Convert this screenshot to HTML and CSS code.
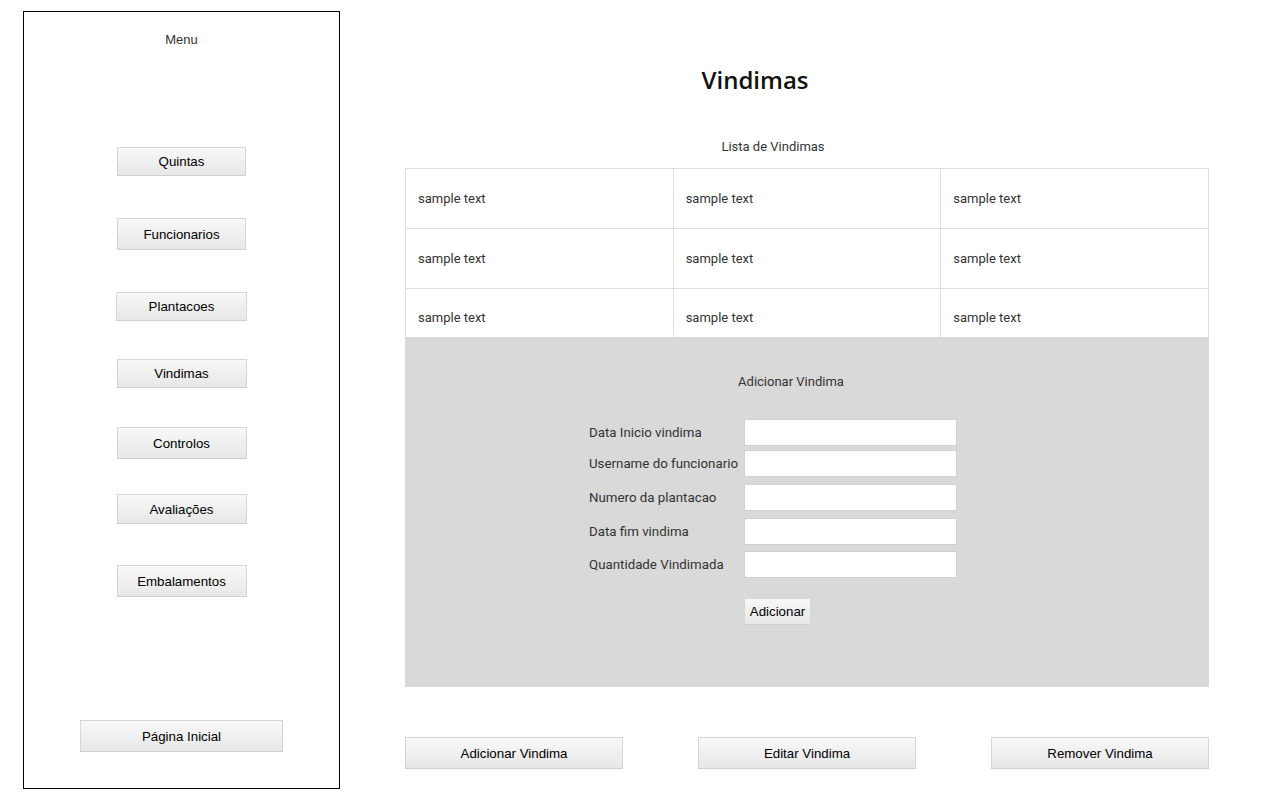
FILE: index.html
```html
<!DOCTYPE html>
<html lang="pt">
<head>
<meta charset="utf-8">
<title>Vindimas</title>
<link rel="stylesheet" href="styles.css">
</head>
<body>
<div class="page">
  <aside class="sidebar">
    <div class="menu-title">Menu</div>
    <button class="btn side b-quintas">Quintas</button>
    <button class="btn side b-func">Funcionarios</button>
    <button class="btn side b-plant">Plantacoes</button>
    <button class="btn side b-vind">Vindimas</button>
    <button class="btn side b-contr">Controlos</button>
    <button class="btn side b-aval">Avaliações</button>
    <button class="btn side b-emb">Embalamentos</button>
    <button class="btn side b-home">Página Inicial</button>
  </aside>
  <main class="main">
    <h1 class="title">Vindimas</h1>
    <div class="list-title">Lista de Vindimas</div>
    <div class="table-wrap">
      <table class="grid">
        <tr><td>sample text</td><td>sample text</td><td>sample text</td></tr>
        <tr><td>sample text</td><td>sample text</td><td>sample text</td></tr>
        <tr><td>sample text</td><td>sample text</td><td>sample text</td></tr>
      </table>
    </div>
    <section class="panel">
      <div class="panel-title">Adicionar Vindima</div>
      <form class="form">
        <label class="r1">Data Inicio vindima</label><input class="r1" type="text">
        <label class="r2">Username do funcionario</label><input class="r2" type="text">
        <label class="r3">Numero da plantacao</label><input class="r3" type="text">
        <label class="r4">Data fim vindima</label><input class="r4" type="text">
        <label class="r5">Quantidade Vindimada</label><input class="r5" type="text">
        <span></span><button type="button" class="btn add">Adicionar</button>
      </form>
    </section>
    <div class="actions">
      <button class="btn action">Adicionar Vindima</button>
      <button class="btn action">Editar Vindima</button>
      <button class="btn action">Remover Vindima</button>
    </div>
  </main>
</div>
</body>
</html>
```

FILE: styles.css
```css
* { box-sizing: border-box; }
html, body { margin: 0; padding: 0; background: #fff; }
body { font-family: "Liberation Sans", Arial, sans-serif; color: #000; }

.page { display: flex; align-items: flex-start; }

.sidebar {
  margin: 11px 0 0 23px;
  width: 317px;
  height: 778px;
  border: 1px solid #000;
  display: flex;
  flex-direction: column;
  align-items: center;
}
.menu-title {
  margin-top: 20px;
  font-size: 13px;
  line-height: 16px;
  color: #333;
}

.btn {
  font-family: "Liberation Sans", Arial, sans-serif;
  font-size: 13.3px;
  color: #000;
  background: linear-gradient(#f8f8f8, #e7e7e7);
  border: 1px solid #d6d6d6;
  border-bottom-color: #cfcfcf;
  border-radius: 0;
  padding: 0;
  cursor: pointer;
}

.side { width: 129px; }
.b-quintas { margin-top: 99px; height: 29px; }
.b-func { margin-top: 42px; height: 32px; }
.b-plant { margin-top: 42px; height: 29px; width: 131px; }
.b-vind { margin-top: 38px; height: 29px; width: 130px; }
.b-contr { margin-top: 39px; height: 32px; width: 130px; }
.b-aval { margin-top: 35px; height: 30px; width: 130px; }
.b-emb { margin-top: 41px; height: 32px; width: 130px; }
.b-home { margin-top: 123px; height: 32px; width: 203px; }

.main {
  margin-left: 65px;
  width: 804px;
  padding-top: 64px;
}
.title {
  margin: 0;
  padding-right: 104px;
  text-align: center;
  font-family: "Open Sans", sans-serif;
  font-weight: 600;
  font-size: 24px;
  line-height: 32px;
  color: #111;
}
.list-title {
  margin-top: 43px;
  padding-right: 68px;
  text-align: center;
  font-family: Roboto, sans-serif;
  font-size: 13px;
  line-height: 16px;
  color: #333;
}
.table-wrap {
  margin-top: 13px;
  height: 169px;
  overflow: hidden;
}
.grid {
  width: 804px;
  border-collapse: collapse;
  table-layout: fixed;
}
.grid td {
  border: 1px solid #dddddd;
  height: 60px;
  padding: 0 0 0 12px;
  font-family: Roboto, sans-serif;
  font-size: 13px;
  color: #333;
  vertical-align: middle;
}
.grid tr:last-child td { padding-bottom: 2px; }

.panel {
  background: #d9d9d9;
  height: 350px;
  padding-top: 37px;
}
.panel-title {
  padding-right: 32px;
  text-align: center;
  font-family: Roboto, sans-serif;
  font-size: 13px;
  line-height: 16px;
  color: #333;
}
.form {
  margin: 29px 0 0 184px;
  display: grid;
  grid-template-columns: 155px 213px;
  align-items: center;
}
.form label {
  font-family: Roboto, sans-serif;
  font-size: 13.3px;
  color: #333;
  white-space: nowrap;
}
.form input {
  height: 27px;
  width: 213px;
  border: 1px solid #d0d0d0;
  background: #fff;
  margin: 0;
}
.form .r2 { margin-top: 4px; }
.form .r3, .form .r4 { margin-top: 7px; }
.form .r5 { margin-top: 6px; }
.add {
  margin-top: 20px;
  width: 67px;
  height: 27px;
  font-size: 13.3px;
  justify-self: start;
}

.actions {
  margin-top: 50px;
  display: flex;
  justify-content: space-between;
}
.action { width: 218px; height: 32px; }
```
